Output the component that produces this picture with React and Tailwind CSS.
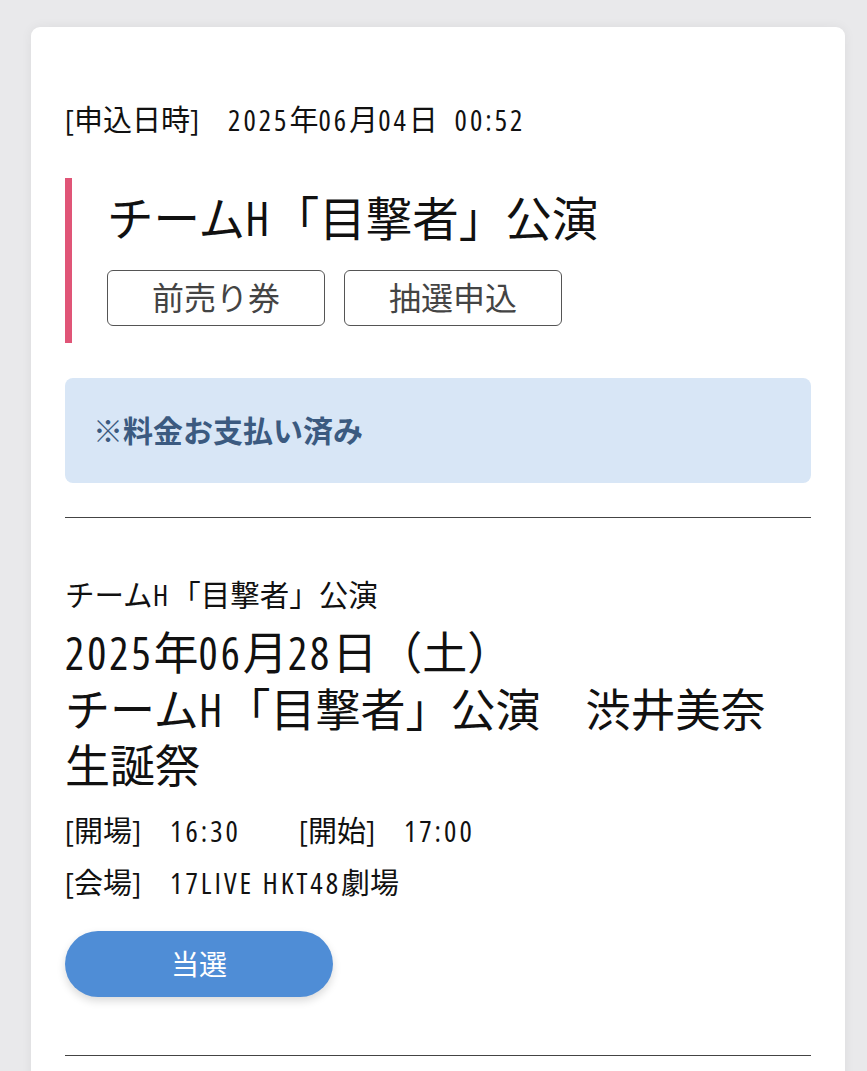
import React from 'react';

// condensed latin + CJK fallback, close to the phone font in the capture
const jp = { fontFamily: '"Open Sans", "Noto Sans CJK JP", "Noto Sans", sans-serif' };

const L = ({ children }) => <span className="tracking-[3px]">{children}</span>;
const LB = ({ children }) => <span className="tracking-[3px]">{children}</span>;

const Tag = ({ children }) => (
  <div className="w-[218px] h-[56px] border border-[#555] rounded-[6px] flex items-center justify-center text-[32px] leading-none text-[#444]">
    {children}
  </div>
);

export default function App() {
  return (
    <div style={jp} className="h-[1071px] overflow-hidden bg-[#e9e9eb] pt-[27px] pl-[31px] pr-[22px] font-stretch-condensed">
      <div className="bg-white rounded-t-[9px] shadow-[0_0_12px_rgba(0,0,0,0.06)] px-[34px] pt-[76px] pb-[60px] text-[#111]">
        {/* application datetime */}
        <p className="text-[29px] leading-[34px]">
          [申込日時]　<L>2025</L>年<L>06</L>月<L>04</L>日<L>&nbsp; 00:52</L>
        </p>

        {/* title block */}
        <div className="mt-[41px] border-l-[7px] border-[#e05577] pl-[35px] pt-[14px] pb-[17px]">
          <h1 className="text-[46.5px] leading-[52px] font-normal">
            チーム<LB>H</LB>「目撃者」公演
          </h1>
          <div className="mt-[26px] flex gap-[19px]">
            <Tag>前売り券</Tag>
            <Tag>抽選申込</Tag>
          </div>
        </div>

        {/* payment notice */}
        <div className="mt-[35px] h-[105px] bg-[#d8e6f6] rounded-[8px] flex items-center px-[28px]">
          <span className="text-[30px] font-bold text-[#3b5a80]">※料金お支払い済み</span>
        </div>

        <hr className="mt-[34px] border-t border-[#444]" />

        {/* performance */}
        <div className="pt-[60px]">
          <p className="text-[29.5px] leading-[34px]">
            チーム<L>H</L>「目撃者」公演
          </p>
          <div className="mt-[13px] text-[45px] leading-[56.5px]">
            <p>
              <LB>2025</LB>年<LB>06</LB>月<LB>28</LB>日（土）
            </p>
            <p>
              チーム<LB>H</LB>「目撃者」公演　渋井美奈
            </p>
            <p>生誕祭</p>
          </div>
          <p className="mt-[10px] text-[29px] leading-[52px]">
            [開場]　<L>16:30</L>　　[開始]　<L>17:00</L>
          </p>
          <p className="text-[29px] leading-[52px]">
            [会場]　<L>17LIVE HKT48</L>劇場
          </p>
          <button className="mt-[22px] w-[268px] h-[66px] rounded-full bg-[#4f8dd6] text-white text-[28px] shadow-[0_4px_8px_rgba(0,0,0,0.15)]">
            当選
          </button>
        </div>

        <hr className="mt-[58px] border-t border-[#444]" />
      </div>
    </div>
  );
}
